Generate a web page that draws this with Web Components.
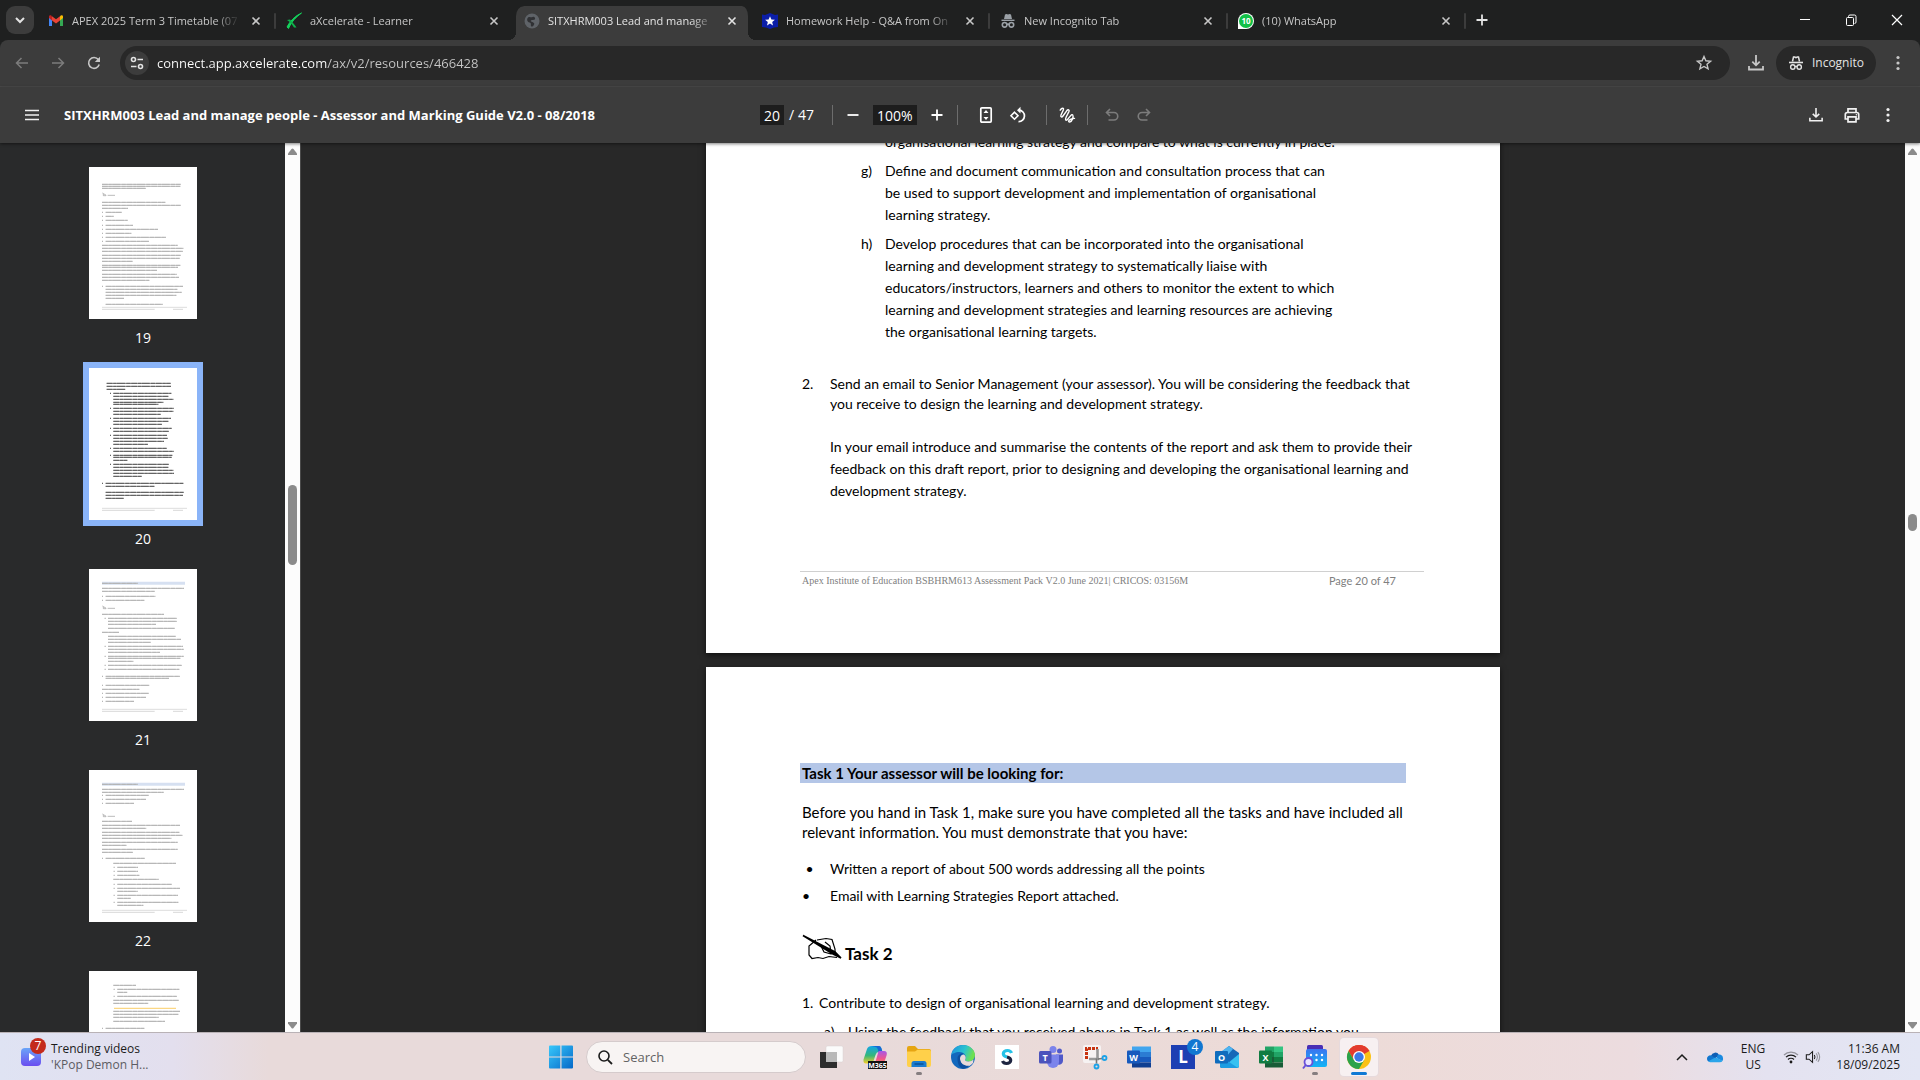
<!DOCTYPE html>
<html lang="en">
<head>
<meta charset="utf-8">
<title>SITXHRM003 Lead and manage people</title>
<style>
  html, body {
    height: 100%;
    margin: 0;
  }
  body {
    font: 12px/16px "Open Sans", "Noto Sans", sans-serif;
    overflow: hidden;
    background: #282828;
  }
</style>
</head>
<body>
<desktop-screen></desktop-screen>

<script>
const icons = {
  chevron: ['0 0 16 16', '<path d="M4 6l4 4 4-4" fill="none" stroke="currentColor" stroke-width="2"/>'],
  up: ['0 0 16 16', '<path d="M3 11l5-5 5 5" fill="none" stroke="currentColor" stroke-width="1.5"/>'],
  close: ['0 0 16 16', '<path d="M4.500 4.500l7 7m0-7l-7 7" fill="none" stroke="currentColor" stroke-width="1.600"/>'],
  plus: ['0 0 16 16', '<path d="M8 2.500v11M2.500 8h11" fill="none" stroke="currentColor" stroke-width="1.800"/>'],
  minus: ['0 0 16 16', '<path d="M2.500 8h11" fill="none" stroke="currentColor" stroke-width="1.800"/>'],
  winMin: ['0 0 12 12', '<path d="M1 5.500h10" stroke="currentColor"/>'],
  winMax: ['0 0 12 12', '<path d="M3.500 3V2.500a1.500 1.500 0 0 1 1.500-1.500h4.500A1.500 1.500 0 0 1 11 2.500V8a1.500 1.500 0 0 1-1.500 1.500" fill="none" stroke="currentColor"/><rect x="1.500" y="3.500" width="7" height="8" rx="1" fill="none" stroke="currentColor"/>'],
  winClose: ['0 0 12 12', '<path d="M1 1l10 10M11 1L1 11" stroke="currentColor" stroke-width="1.200"/>'],
  back: ['0 0 16 16', '<path d="M7.500 3L2.500 8l5 5M2.500 8H14" fill="none" stroke="currentColor" stroke-width="1.500"/>'],
  forward: ['0 0 16 16', '<path d="M8.500 3l5 5-5 5M13.500 8H2" fill="none" stroke="currentColor" stroke-width="1.500"/>'],
  reload: ['0 0 16 16', '<path d="M13.200 9.500A5.400 5.400 0 1 1 12.300 4.600L13.500 6" fill="none" stroke="currentColor" stroke-width="1.600"/><path d="M14 1.800V7H8.800z" fill="currentColor"/>'],
  tune: ['0 0 16 16', '<g fill="none" stroke="currentColor" stroke-width="1.600"><circle cx="4.500" cy="4.500" r="2"/><path d="M8.500 4.500H14M2 11.500h5.500"/><circle cx="11.500" cy="11.500" r="2"/></g>'],
  star: ['0 0 16 16', '<path d="M8 1.500l1.900 4.300 4.700.4-3.600 3.100 1.100 4.600L8 11.500l-4.100 2.400L5 9.300 1.400 6.200l4.700-.4z" fill="none" stroke="currentColor" stroke-width="1.400"/>'],
  download: ['0 0 16 16', '<path d="M8 0v10M4.300 6.700L8 10.300l3.700-3.600M1 11v3.500h14V11" fill="none" stroke="currentColor" stroke-width="1.800"/>'],
  incognito: ['0 0 16 16', '<path d="M4.500 6.500L5.500 2h1.200L8 2.700 9.300 2h1.200l1 4.500" fill="none" stroke="currentColor" stroke-width="1.500"/><path d="M1 7.500h14" stroke="currentColor" stroke-width="1.600"/><g fill="none" stroke="currentColor" stroke-width="1.400"><circle cx="4.800" cy="12" r="2.200"/><circle cx="11.200" cy="12" r="2.200"/><path d="M7 11.700q1-.6 2 0"/></g>'],
  incognitoSolid: ['0 0 16 16', '<path d="M5 1.500l1.500-.5L8 1.500 9.500 1l1.500.5L12 6H4z" fill="#9aa0a6"/><path d="M1.500 7.300h13" stroke="#9aa0a6" stroke-width="1.400"/><g fill="none" stroke="#9aa0a6" stroke-width="1.600"><circle cx="4.600" cy="11.800" r="2.300"/><circle cx="11.400" cy="11.800" r="2.300"/><path d="M6.800 11.500q1.200-.8 2.400 0"/></g>'],
  dots: ['0 0 16 16', '<g fill="currentColor"><circle cx="8" cy="2.500" r="1.600"/><circle cx="8" cy="8" r="1.600"/><circle cx="8" cy="13.500" r="1.600"/></g>'],
  menu: ['0 0 16 16', '<path d="M1 3.500h14M1 8h14M1 12.500h14" stroke="currentColor" stroke-width="1.700"/>'],
  fit: ['0 0 16 16', '<rect x="2.800" y=".9" width="10.400" height="14.200" rx="1" fill="none" stroke="currentColor" stroke-width="1.700"/><path d="M8 3l2.500 3h-5zM8 13l2.500-3h-5z" fill="currentColor"/>'],
  rotate: ['0 0 16 16', '<path d="M4.500 5.200L8 8.700l-3.500 3.500L1 8.700z" fill="none" stroke="currentColor" stroke-width="1.600"/><path d="M9 3.200a5.700 5.700 0 1 1-.5 11.400" fill="none" stroke="currentColor" stroke-width="1.700"/><path d="M10.500-.2L7 3.200l3.500 3.400z" fill="currentColor"/>'],
  draw: ['0 0 16 16', '<path d="M1.200 3.200C2.700.6 5.200.6 4.300 3L2 8c-.8 2.200.8 2.700 2 1l3.700-5.200c1.400-1.800 3-1 2.200.8L7.200 10c-1.500 3.500.3 4.300 2 1.700 1.700-2.500 3.800-5 4.600-3.700 1 1.700-1 7-3 7-2.500 0-.8-3.600 4.700-3.600" fill="none" stroke="currentColor" stroke-width="1.400" stroke-linecap="round"/>'],
  undo: ['0 0 16 16', '<path d="M6 2L2.500 5.500 6 9M3 5.500h7a3.700 3.700 0 0 1 0 7.500H4.500" fill="none" stroke="currentColor" stroke-width="1.600"/>'],
  redo: ['0 0 16 16', '<path d="M10 2l3.500 3.500L10 9M13 5.500H6A3.700 3.700 0 0 0 6 13h5.500" fill="none" stroke="currentColor" stroke-width="1.600"/>'],
  print: ['0 0 16 16', '<g fill="none" stroke="currentColor" stroke-width="1.700"><path d="M4 5V1.800h8V5"/><path d="M4 12H1.300V7.500A2 2 0 0 1 3.300 5.500h9.400a2 2 0 0 1 2 2V12H12"/><path d="M4 9.800h8v5H4z"/></g><circle cx="12.400" cy="7.800" r=".8" fill="currentColor"/>'],
  gmail: ['0 0 16 16', '<path d="M1 3.500V13h3V6.500z" fill="#4285f4"/><path d="M12 6.500V13h3V3.500z" fill="#34a853"/><path d="M12 3.500v4L15 5V3.500a1.400 1.400 0 0 0-2.300-1z" fill="#fbbc04"/><path d="M4 3.500v4L1 5V3.500a1.400 1.400 0 0 1 2.300-1z" fill="#c5221f"/><path d="M4 3.300l4 3 4-3v4.200l-4 3-4-3z" fill="#ea4335"/>'],
  axcel: ['0 0 16 16', '<path d="M15.500 0C10 4 5 9 2.500 15.500L1 14C4 8 9 3 15.500 0z" fill="#14d25c" stroke="#14d25c"/><path d="M1 7l3-.6c2 2 4.500 5 6.500 8.100H8C6 11.500 4 9 1 7z" fill="#0fb14b"/>'],
  globe: ['0 0 16 16', '<circle cx="8" cy="8" r="7.500" fill="#5f6368"/><path d="M4 4.500C6 3 7 5 8.500 4s3 .5 2.500 2-3 .5-4 1.500 2 1.500 3 2.500-1 4-2.500 3.500S8 10 5.500 9.500 2.500 6 4 4.500z" fill="#303134"/>'],
  starBadge: ['0 0 16 16', '<path d="M0 1.500L3 2l5-2 5 2 3-.5V14l-4 .5L8 16l-4-1.500L0 14z" fill="#0b1ea8"/><path d="M8 3.200l1.400 3.200 3.500.3-2.700 2.300.8 3.400L8 10.600l-3 1.800.8-3.400-2.700-2.300 3.500-.3z" fill="#fff"/>'],
  whatsapp: ['0 0 16 16', '<path d="M0 16V8a8 8 0 1 1 8 8z" fill="#fff"/><circle cx="8" cy="8" r="7" fill="#12c047"/><text x="8" y="11" font-size="8" font-weight="700" text-anchor="middle" fill="#fff">10</text>'],
  pen: ['0 0 40 26', '<path d="M1 1.500L33 18l6 6-8-4z" fill="#000" stroke="#000" stroke-width="1.600"/><path d="M15 6l9-1.500 6 1L33 15v4M14 6L7 12v9l3 3.500 6-1 5 1 6-2 8 1" fill="none" stroke="#000" stroke-width="1.200"/><path d="M19 12l3 6 7 2-1-8-5-4M23 13l4 5" fill="none" stroke="#000" stroke-width="1.200"/>'],
  widgets: ['0 0 24 24', '<defs><linearGradient id="g" x2="0" y2="1"><stop stop-color="#6aa5f8"/><stop offset="1" stop-color="#6a4df0"/></linearGradient></defs><rect x="2" y="3" width="20" height="18" rx="4" fill="url(#g)"/><path d="M10 8l6 4-6 4z" fill="#fff"/>'],
  windows: ['0 0 24 24', '<defs><linearGradient id="g" x2="1" y2="1"><stop stop-color="#38c8fb"/><stop offset="1" stop-color="#0468c8"/></linearGradient></defs><path d="M0 1.500Q0 .5 1 .5h10.300v11H0zM12.500.5H23q1 0 1 1v10H12.500zM0 12.500h11.300v11H1q-1 0-1-1zM12.500 12.500H24v10q0 1-1 1H12.500z" fill="url(#g)"/>'],
  search: ['0 0 16 16', '<circle cx="7" cy="7" r="5" fill="none" stroke="currentColor" stroke-width="1.600"/><path d="M10.800 10.800L15 15" stroke="currentColor" stroke-width="1.800"/>'],
  taskView: ['0 0 24 24', '<rect x="7" y="1" width="17" height="16" rx="1.500" fill="#fbfbfb" stroke="#d8d2d2" stroke-width=".5"/><path d="M1 7h17v16H2q-1 0-1-1z" fill="#2d2d2d"/><path d="M7 7h11v10H7z" fill="#b9b9b9"/>'],
  copilot: ['0 0 24 24', '<defs><linearGradient id="g" x2="0" y2="1"><stop stop-color="#12a5e8"/><stop offset=".55" stop-color="#35b779"/><stop offset="1" stop-color="#f6cf28"/></linearGradient><linearGradient id="h" x2="0" y2="1"><stop stop-color="#a657e8"/><stop offset=".6" stop-color="#f0568c"/><stop offset="1" stop-color="#f79552"/></linearGradient></defs><path d="M9 1h7q1.500 0 2.300 2l1.200 4h-4q-2 0-3 3l-2 6q-1 2.500-3 2.500H3q-3 0-2.500-4L4 4q1-3 5-3z" fill="url(#g)"/><path d="M9 1h7q1.500 0 2.300 2l1.200 4h-4q-1-5-3-5z" fill="#1769d4"/><path d="M16 6h5q3.500 0 2.700 4l-2 6q-1 3-4 3h-8q2 0 3-3l2-7q.5-3 1.300-3z" fill="url(#h)"/><rect x="5" y="16" width="19" height="8" fill="#111"/><text x="14.500" y="22.500" font-size="7" font-weight="700" text-anchor="middle" fill="#fff">M365</text>'],
  folder: ['0 0 24 24', '<path d="M0 3q0-2 2-2h6l3 3h11q2 0 2 2v14H0z" fill="#e6a512"/><path d="M0 6.500h8l2.500-1.700H22q2 0 2 1.700V20q0 2-2 2H2q-2 0-2-2z" fill="#ffd04a"/><path d="M4.500 22v-3.500q0-2.500 2.500-2.500h10q2.500 0 2.500 2.500V22z" fill="#1a7cd0"/><path d="M7.500 19h9" stroke="#0b4f91" stroke-width="1.400"/>'],
  edge: ['0 0 24 24', '<defs><linearGradient id="g" x2="1" y2=".3"><stop stop-color="#1b8fe0"/><stop offset=".6" stop-color="#2bc3cf"/><stop offset="1" stop-color="#6fe04f"/></linearGradient></defs><circle cx="12" cy="12" r="12" fill="#1268bd"/><path d="M.3 10C1 4 6 0 12 0c7 0 12 5 12 10 0 4-3 6.500-6.500 6.500-3 0-4-1.200-3.200-2.300C16 11.500 13.500 7 8.500 7 4 7 1 9 .3 10z" fill="url(#g)"/><path d="M9 13.500c0-2.500 2-4 4-4 2 1.500 2 3.500 1.300 4.700-.8 1.100.2 2.300 3.200 2.300 2 0 3.800-.7 5-2l-.5 3.500q-3 3.500-7 3.500C11 21.500 9 17 9 13.500z" fill="#e7dada"/><path d="M6.500 13.500c0-3 2.500-5.500 6-5-3 1-4 3-3.500 6 .7 4.500 5 6.700 9 6.200-2 2-4 3-6 3-3.500-1-5.500-5-5.500-10.200z" fill="#0c4f9f"/>'],
  solver: ['0 0 24 24', '<path d="M0 0h24v24H0z" fill="#fff"/><path d="M16.500 8Q15.500 5.500 12.500 5.500C10 5.500 8.300 7 8.300 8.800c0 2 1.700 2.700 3.700 3.200" fill="none" stroke="#25c2e8" stroke-width="3.200"/><path d="M7.500 16q1 2.500 4 2.500c2.500 0 4.200-1.500 4.200-3.300 0-2-1.700-2.700-3.700-3.200" fill="none" stroke="#1d2440" stroke-width="3.200"/>'],
  teams: ['0 0 24 24', '<circle cx="20.500" cy="6" r="2.500" fill="#5059c9"/><circle cx="14" cy="4.500" r="3.500" fill="#7b83eb"/><path d="M17 9.500h7v6.500a4 4 0 0 1-5 3.500z" fill="#5059c9"/><path d="M8 9.500h12v7.500a6 6 0 0 1-12 0z" fill="#7b83eb"/><rect y="6" width="12.500" height="12.500" rx="1.500" fill="#4b53bc"/><text x="6.200" y="15.500" font-size="9" font-weight="700" text-anchor="middle" fill="#fff">T</text>'],
  snip: ['0 0 24 24', '<rect width="18" height="18" rx="2" fill="#f6f2f2"/><path d="M3.500 14V3.500H15" fill="none" stroke="#c8320f" stroke-width="3" stroke-dasharray="3 1"/><path d="M14.500 4v9.500M6 14h10" stroke="#999" stroke-width="2.600"/><path d="M15 14l4-.5M13.500 13.500v5" stroke="#777" stroke-width="1.600"/><g fill="none" stroke="#1ba2e8" stroke-width="1.800"><circle cx="21.500" cy="13" r="2"/><circle cx="13.500" cy="21.500" r="2"/></g>'],
  word: ['0 0 24 24', '<path d="M5 1.500h19V7H5z" fill="#41a5ee"/><path d="M5 7h19v5H5z" fill="#2b7cd3"/><path d="M5 12h19v5.500H5z" fill="#185abd"/><path d="M5 17.500h19v5H5z" fill="#103f91"/><rect y="5.500" width="13" height="13" rx="1" fill="#185abd"/><text x="6.500" y="15.500" font-size="9" font-weight="700" text-anchor="middle" fill="#fff">W</text>'],
  ell: ['0 0 24 24', '<path d="M0 0h24v24H0z" fill="#1d3fb3"/><text x="12" y="18" font-size="17" font-weight="700" text-anchor="middle" fill="#fff">L</text>'],
  outlook: ['0 0 24 24', '<path d="M5 8l9-7 10 7v13q0 2-2 2H7q-2 0-2-2z" fill="#1668b8"/><path d="M7 6l7-5 4 3-8 9z" fill="#4fb4f0"/><path d="M24 9v12q0 2-2 2H7z" fill="#35c1f1"/><path d="M5 11l18 12H7q-2 0-2-2z" fill="#1b9de2"/><rect y="6" width="13" height="12.500" rx="1" fill="#0f6cbd"/><text x="6.500" y="15.500" font-size="9" font-weight="700" text-anchor="middle" fill="#fff">O</text>'],
  excel: ['0 0 24 24', '<path d="M6 1.500h9V7H6z" fill="#21a366"/><path d="M15 1.500h9V7h-9z" fill="#33c481"/><path d="M6 7h9v5H6z" fill="#107c41"/><path d="M15 7h9v5h-9z" fill="#21a366"/><path d="M6 12h18v5.500H6z" fill="#107c41"/><path d="M6 12h9v5.500H6z" fill="#185c37"/><path d="M6 17.500h18v5H6z" fill="#185c37"/><rect y="5.500" width="13" height="13" rx="1" fill="#107c41"/><text x="6.500" y="15.500" font-size="9" font-weight="700" text-anchor="middle" fill="#fff">X</text>'],
  lens: ['0 0 24 24', '<defs><linearGradient id="g" x2="0" y2="1"><stop stop-color="#3a74f0"/><stop offset="1" stop-color="#12b5f5"/></linearGradient></defs><path d="M4 5V1.500Q4 0 5.500 0h13Q20 0 20 1.500V5z" fill="#4a2fb5"/><rect x="3" y="4" width="21" height="18" rx="2" fill="url(#g)"/><g fill="#fff"><circle cx="8" cy="10" r="1.200"/><circle cx="13.500" cy="10" r="1.200"/><circle cx="19" cy="10" r="1.200"/><circle cx="13.500" cy="15" r="1.200"/><circle cx="19" cy="15" r="1.200"/></g><circle cx="5.500" cy="17" r="4" fill="#e8e4ff" stroke="#6a50d8" stroke-width="1.800"/><path d="M2.800 20L0 23.500" stroke="#6a50d8" stroke-width="2"/>'],
  chrome: ['0 0 24 24', '<circle cx="12" cy="12" r="12" fill="#fbc116"/><path d="M12 12L1.600 6A12 12 0 0 1 22.400 6z" fill="#e33b2e"/><path d="M12 6h10.400A12 12 0 0 0 1.600 6l5.200 9z" fill="#e33b2e"/><path d="M1.600 6A12 12 0 0 0 12 24l5.200-9H6.800z" fill="#2ba24c"/><circle cx="12" cy="12" r="6" fill="#fff"/><circle cx="12" cy="12" r="4.700" fill="#3b78e7"/>'],
  cloud: ['0 0 24 16', '<path d="M6 6A6.500 6.500 0 0 1 18 5l-5 5-9 3z" fill="#0f5fb5"/><path d="M0 11a5 5 0 0 1 7-5l8 5-5 4H4.500A4.500 4.500 0 0 1 0 11z" fill="#1277cf"/><path d="M15 6.500A5 5 0 0 1 24 9.500a5 5 0 0 1-1 4.500l-8-4z" fill="#1a8ae0"/><path d="M2 14.500l9-5q2-1.200 4 0l8.500 4.200Q22 16 19 16H5q-2 0-3-1.500z" fill="#2ba5ea"/>'],
  wifi: ['0 0 16 16', '<circle cx="8" cy="13" r="1.400" fill="currentColor"/><g fill="none" stroke="currentColor" stroke-width="1.200"><path d="M5 10.500a4.200 4.200 0 0 1 6 0M3 8.200a7 7 0 0 1 10 0"/><path d="M1 6a10 10 0 0 1 14 0" opacity=".4"/></g>'],
  volume: ['0 0 18 16', '<g fill="none" stroke="currentColor" stroke-width="1.200"><path d="M1.500 5.500h3L8.500 2v12l-4-3.500h-3z"/><path d="M10.500 5.700q1.500 2.300 0 4.600"/><path d="M12.500 4q3 4 0 8M14.500 2.500q4 5.500 0 11" opacity=".4"/></g>'],
}

class BaseElement extends HTMLElement {
  connectedCallback() {
    if (this.shadowRoot) return
    this.attachShadow({ mode: 'open' })
    const template = document.createElement('template')
    template.innerHTML = this.render()
    this.shadowRoot.appendChild(template.content.cloneNode(true))
  }
}

class UiIcon extends BaseElement {
  render() {
    const [viewBox, body] = icons[this.getAttribute('name')]
    return /* html */ `
<style>
  :host {
    display: inline-flex;
    flex: none;
    width: var(--size, 16px);
    height: var(--size, 16px);
  }
  svg {
    width: 100%;
    height: 100%;
    overflow: visible;
  }
</style>
<svg viewBox="${viewBox}" aria-hidden="true">${body}</svg>
`
  }
}

// round transparent button around one icon
class IconButton extends BaseElement {
  render() {
    return /* html */ `
<style>
  :host {
    display: flex;
    flex: none;
    width: var(--box, 36px);
    height: var(--box, 36px);
  }
  button {
    display: flex;
    align-items: center;
    justify-content: center;
    width: 100%;
    height: 100%;
    padding: 0;
    border: 0;
    border-radius: 8px;
    background: none;
    color: inherit;
  }
</style>
<button aria-label="${this.getAttribute('label')}"><ui-icon name="${this.getAttribute('name')}"></ui-icon></button>
`
  }
}

class BrowserTab extends BaseElement {
  render() {
    return /* html */ `
<style>
  :host {
    position: relative;
    display: flex;
    align-items: center;
    flex: 0 1 238px;
    min-width: 0;
    height: 34px;
    box-sizing: border-box;
    padding: 0 0 4px 10px;
    font-size: 11px;
    color: #c7c7c7;
  }
  :host([active]) {
    padding-left: 8px;
    border: solid transparent;
    border-width: 0 4px 0 2px;
    background: #3c3c3c padding-box;
    border-radius: 10px 10px 0 0;
    color: #e3e3e3;
  }
  /* flared feet of the selected tab */
  :host([active])::before,
  :host([active])::after {
    content: '';
    position: absolute;
    bottom: 0;
    width: 8px;
    height: 8px;
  }
  :host([active])::before {
    left: -8px;
    background: radial-gradient(circle at 0 0, #1f2020 8px, #3c3c3c 8px);
  }
  :host([active])::after {
    right: -8px;
    background: radial-gradient(circle at 100% 0, #1f2020 8px, #3c3c3c 8px);
  }
  .select {
    display: flex;
    align-items: center;
    gap: 8px;
    flex: 1;
    min-width: 0;
    padding: 0;
    border: 0;
    background: none;
    font: inherit;
    color: inherit;
  }
  .title {
    flex: 1;
    overflow: hidden;
    text-align: left;
    white-space: nowrap;
    mask-image: linear-gradient(to right, #000 85%, transparent);
  }
  icon-button {
    --box: 16px;
    margin-left: 8px;
  }
  .rule {
    width: 2px;
    height: 16px;
    margin-left: 10px;
    border-radius: 1px;
    background: #3c3c3c;
  }
  :host([plain]) .rule {
    background: none;
  }
  :host([active]) .rule {
    width: 0;
    margin-left: 8px;
  }
</style>
<button class="select">
  <ui-icon name="${this.getAttribute('icon')}"></ui-icon>
  <span class="title"><slot></slot></span>
</button>
<icon-button name="close" label="Close tab"></icon-button>
<span class="rule"></span>
`
  }
}

class TabStrip extends BaseElement {
  render() {
    return /* html */ `
<style>
  :host {
    display: flex;
    align-items: flex-end;
    height: 40px;
    background: #1f2020;
    color: #e3e3e3;
  }
  .menu {
    --box: 28px;
    margin: 0 4px 6px 6px;
    border-radius: 9px;
    background: #3c3c3c;
  }
  .tabs {
    display: flex;
    flex: 0 1 1428px;
    min-width: 0;
  }
  .new {
    --box: 28px;
    margin: 0 0 6px 2px;
  }
  .window {
    display: flex;
    align-self: stretch;
    align-items: center;
    margin-left: auto;
    color: #fff;
  }
  .window icon-button {
    --box: 46px;
    --size: 12px;
    height: 40px;
  }
</style>
<icon-button class="menu" name="chevron" label="Search tabs"></icon-button>
<div class="tabs">
  <browser-tab icon="gmail">APEX 2025 Term 3 Timetable (07</browser-tab>
  <browser-tab icon="axcel" plain>aXcelerate - Learner</browser-tab>
  <browser-tab icon="globe" active plain>SITXHRM003 Lead and manage</browser-tab>
  <browser-tab icon="starBadge">Homework Help - Q&amp;A from On</browser-tab>
  <browser-tab icon="incognitoSolid">New Incognito Tab</browser-tab>
  <browser-tab icon="whatsapp">(10) WhatsApp</browser-tab>
</div>
<icon-button class="new" name="plus" label="New tab"></icon-button>
<div class="window">
  <icon-button name="winMin" label="Minimise"></icon-button>
  <icon-button name="winMax" label="Restore"></icon-button>
  <icon-button name="winClose" label="Close"></icon-button>
</div>
`
  }
}

class AddressBar extends BaseElement {
  render() {
    return /* html */ `
<style>
  :host {
    display: flex;
    align-items: center;
    height: 47px;
    box-sizing: border-box;
    padding: 0 4px;
    border-radius: 8px 8px 0 0;
    border-bottom: 1px solid #4a4a4a;
    background: #3c3c3c;
    color: #c7c7c7;
  }
  .off {
    color: #7c7c7c;
  }
  .url {
    display: flex;
    align-items: center;
    flex: 1;
    height: 34px;
    margin: 0 8px;
    padding: 0 8px 0 5px;
    border-radius: 17px;
    background: #282828;
  }
  .site {
    --box: 24px;
    border-radius: 50%;
    background: #3c3c3c;
    color: #e3e3e3;
  }
  input {
    flex: 1;
    padding: 0 8px;
    border: 0;
    outline: 0;
    font: 13px/20px "Open Sans", sans-serif;
    color: #e3e3e3;
    /* host part brighter than the path */
    background: linear-gradient(to right, #fff 178px, #c7c7c7 178px) text;
    -webkit-text-fill-color: transparent;
  }
  .incognito {
    display: flex;
    align-items: center;
    gap: 8px;
    height: 34px;
    margin: 0 4px 0 2px;
    padding: 0 12px;
    border: 0;
    border-radius: 17px;
    background: #282828;
    font: inherit;
    color: #e3e3e3;
  }
</style>
<icon-button class="off" name="back" label="Back"></icon-button>
<icon-button class="off" name="forward" label="Forward"></icon-button>
<icon-button name="reload" label="Reload"></icon-button>
<div class="url">
  <icon-button class="site" name="tune" label="Site information"></icon-button>
  <input aria-label="Address" value="connect.app.axcelerate.com/ax/v2/resources/466428">
  <icon-button name="star" label="Bookmark this page"></icon-button>
</div>
<icon-button name="download" label="Downloads"></icon-button>
<button class="incognito"><ui-icon name="incognito"></ui-icon>Incognito</button>
<icon-button name="dots" label="Menu"></icon-button>
`
  }
}

class PdfToolbar extends BaseElement {
  render() {
    return /* html */ `
<style>
  :host {
    display: grid;
    grid-template-columns: 1fr auto 1fr;
    align-items: center;
    height: 56px;
    padding: 0 14px;
    background: #3c3c3c;
    color: #f1f1f1;
    box-shadow: 0 1px 3px rgba(0, 0, 0, .5);
    z-index: 1;
  }
  .side, .tools {
    display: flex;
    align-items: center;
  }
  h1 {
    margin: 0 0 0 14px;
    font-size: 13px;
    line-height: 20px;
    font-weight: 700;
    white-space: nowrap;
    color: #fff;
  }
  .tools {
    font-size: 14px;
    color: #fff;
  }
  .tools icon-button {
    --box: 32px;
  }
  input {
    height: 20px;
    box-sizing: border-box;
    padding: 0;
    border: 0;
    background: #1d1d1d;
    font: inherit;
    text-align: center;
    color: #fff;
  }
  .page {
    width: 24px;
    margin-right: 5px;
  }
  .zoom {
    width: 44px;
    margin: 0 4px;
  }
  .rule {
    width: 1px;
    height: 20px;
    margin: 0 4px;
    background: #6d6d6d;
  }
  .count {
    margin-right: 14px;
  }
  .group {
    display: flex;
    padding: 0 8px;
  }
  .history {
    display: flex;
    padding-left: 4px;
  }
  .off {
    color: #7c7c7c;
  }
  .end {
    justify-content: flex-end;
  }
</style>
<div class="side">
  <icon-button name="menu" label="Menu"></icon-button>
  <h1>SITXHRM003 Lead and manage people - Assessor and Marking Guide V2.0 - 08/2018</h1>
</div>
<div class="tools">
  <input class="page" aria-label="Page number" value="20"><span class="count">/ 47</span>
  <span class="rule"></span>
  <icon-button name="minus" label="Zoom out"></icon-button>
  <input class="zoom" aria-label="Zoom level" value="100%">
  <icon-button name="plus" label="Zoom in"></icon-button>
  <span class="rule"></span>
  <div class="group">
    <icon-button name="fit" label="Fit to page"></icon-button>
    <icon-button name="rotate" label="Rotate"></icon-button>
  </div>
  <span class="rule"></span>
  <icon-button name="draw" label="Draw"></icon-button>
  <span class="rule"></span>
  <div class="history">
    <icon-button class="off" name="undo" label="Undo"></icon-button>
    <icon-button class="off" name="redo" label="Redo"></icon-button>
  </div>
</div>
<div class="side end">
  <icon-button name="download" label="Download" style="--size: 14px"></icon-button>
  <icon-button name="print" label="Print"></icon-button>
  <icon-button name="dots" label="More"></icon-button>
</div>
`
  }
}

class ScrollRail extends BaseElement {
  render() {
    return /* html */ `
<style>
  :host {
    display: flex;
    flex-direction: column;
    align-items: center;
    flex: none;
    width: 15px;
    box-sizing: border-box;
    padding: 5px 0 3px;
    background: #fcfcfc;
  }
  svg {
    flex: none;
    width: 9px;
    height: 8px;
    fill: #8b8b8b;
  }
  .before {
    flex: ${this.getAttribute('before')};
  }
  .after {
    flex: ${this.getAttribute('after')};
  }
  .thumb {
    flex: ${this.getAttribute('size')};
    width: 9px;
    border-radius: 5px;
    background: #8b8b8b;
  }
</style>
<svg viewBox="0 0 9 8"><path d="M3.500 1q1-1 2 0L9 5.500V7H0V5.500z"/></svg>
<span class="before"></span>
<span class="thumb"></span>
<span class="after"></span>
<svg viewBox="0 0 9 8"><path d="M3.500 7q1 1 2 0L9 2.500V1H0v1.500z"/></svg>
`
  }
}

// per sheet: "x y width" of each text line in a 324 x 456 box,
// a leading letter adds a list marker 11 (b) or 10 (l) units to the left
const sheets = {
  19: { title: 83, lines: '39 52 236,39 58 235,39 64 132,39 106 190,39 115 236,39 124 78,b50 136 48,b50 148 24,b50 160 66,b50 175 82,b50 187 157,b50 199 77,b50 211 181,b50 223 130,39 235 227,39 244 244,39 253 243,39 265 236,39 274 233,39 283 92,39 295 235,39 301 228,39 310 165,39 322 224,39 331 231,39 340 142,b50 358 232,50 367 215,50 376 228,50 385 212,50 394 55,50 412 171' },
  20: { dark: true, lines: '53 46 192,53 55 193,53 64 56,l73 76 174,73 85 165,73 94 180,73 103 150,73 109 135,l73 121 181,73 130 180,73 139 142,l73 151 173,73 160 165,73 169 146,l73 181 175,73 190 167,l73 202 161,73 211 163,73 220 152,73 229 104,l73 241 160,73 250 181,l73 262 177,73 268 175,73 277 42,l73 289 167,73 298 165,73 307 180,73 316 182,73 325 85,b50 346 233,50 355 147,50 373 234,50 382 232,50 391 54' },
  21: { title: 116, band: '#d6e0f1', lines: '39 43 107,39 58 246,39 67 158,b50 82 149,b50 94 116,39 136 186,l57 148 207,57 157 207,57 166 144,57 178 200,39 190 51,57 202 203,57 211 219,57 220 128,l57 232 225,57 241 227,57 250 156,l57 262 227,57 268 217,57 277 76,l57 289 222,l57 301 214,b50 322 223,50 328 190,b50 349 131,39 361 112,b50 373 129,b50 385 121,b50 397 85' },
  22: { title: 137, band: '#d6e0f1', lines: '39 43 107,39 58 246,39 67 185,b50 76 129,b50 88 121,b50 100 85,39 154 90,39 166 234,39 175 133,39 187 232,39 196 242,39 205 208,39 217 227,39 226 74,39 238 227,39 247 93,b50 265 117,73 280 188,b85 292 62,b85 304 62,b85 316 66,73 328 136,b85 343 163,b85 355 188,85 364 61,b85 376 182,85 385 40,b85 397 183,85 406 78' },
  23: { mark: 112, lines: '73 43 68,b85 55 186,85 64 30,b85 76 179,73 88 196,73 97 105,73 121 200,73 130 195,73 139 136,73 151 155,b50 172 116' },
}

class PageThumb extends BaseElement {
  render() {
    const number = this.getAttribute('number')
    const sheet = sheets[number]
    let path = ''
    sheet.lines.split(',').forEach((line) => {
      const marker = line.match(/^[bl]/)
      const [x, y, w] = line.replace(/^[bl]/, '').split(' ').map(Number)
      if (marker) path += `M${x - (marker[0] === 'b' ? 11 : 10)} ${y}h3`
      path += `M${x} ${y}h${w}`
    })
    return /* html */ `
<style>
  :host {
    display: flex;
    flex-direction: column;
    align-items: center;
    flex: none;
  }
  button {
    display: block;
    padding: 0;
    border: 6px solid transparent;
    background: none;
  }
  :host([current]) button {
    border-color: #8ab4f8;
  }
  svg {
    display: block;
    width: 108px;
    height: 152px;
    background: #fff;
  }
  span {
    padding: 3px 0 14px;
    font-size: 14px;
    line-height: 20px;
    color: #fff;
  }
</style>
<button aria-label="Go to page ${number}">
  <svg viewBox="0 0 324 456" fill="none">
    ${sheet.band ? `<path d="M39 43h249" stroke="${sheet.band}" stroke-width="9"/>` : ''}
    ${sheet.mark ? `<path d="M75 ${sheet.mark}h186" stroke="#fbd784" stroke-width="4"/>` : ''}
    ${sheet.title ? `<path d="M40 ${sheet.title - 5}l12 7M43 ${sheet.title - 2}v5h8M56 ${sheet.title + 2}h22" stroke="#999" stroke-width="2"/>` : ''}
    <path d="${path}" stroke="${sheet.dark ? '#777' : '#bbb'}" stroke-width="3"/>
    <path d="${path}" stroke="${sheet.dark ? '#444' : '#aaa'}" stroke-width="2" stroke-dasharray="17 3 9 2 24 4 12 3"/>
    <path d="M39 421h255" stroke="#ccc" stroke-width="2"/>
    <path d="M39 427h158M252 427h30" stroke="#c4c4c4" stroke-width="2"/>
  </svg>
</button>
${this.hasAttribute('unlabelled') ? '' : `<span>${number}</span>`}
`
  }
}

class ThumbPane extends BaseElement {
  render() {
    return /* html */ `
<style>
  :host {
    display: flex;
    flex: none;
    width: 300px;
    border-right: 1px solid #4a4a4a;
    background: #292a2b;
  }
  nav {
    display: flex;
    flex-direction: column;
    flex: 1;
    overflow: hidden;
    padding-top: 18px;
  }
  page-thumb {
    padding-left: 1px;
  }
</style>
<nav aria-label="Pages">
  <page-thumb number="19"></page-thumb>
  <page-thumb number="20" current></page-thumb>
  <page-thumb number="21"></page-thumb>
  <page-thumb number="22"></page-thumb>
  <page-thumb number="23" unlabelled></page-thumb>
</nav>
<scroll-rail before="327" size="80" after="453"></scroll-rail>
`
  }
}

class PdfPage extends BaseElement {
  render() {
    return /* html */ `
<style>
  :host {
    display: block;
    flex: none;
    width: 794px;
    box-sizing: border-box;
    padding: 0 76px 0 94px;
    background: #fff;
    box-shadow: 0 2px 6px rgba(0, 0, 0, .6);
    color: #000;
    font: 14px/22px Lato, sans-serif;
  }
</style>
<slot></slot>
`
  }
}

// marker and text of one list entry
class ListEntry extends BaseElement {
  render() {
    return /* html */ `
<style>
  :host {
    display: flex;
    white-space: nowrap;
  }
  .marker {
    flex: none;
    width: var(--marker, 24px);
  }
</style>
<span class="marker">${this.getAttribute('marker')}</span>
<div><slot></slot></div>
`
  }
}

class PdfViewer extends BaseElement {
  render() {
    return /* html */ `
<style>
  :host {
    display: flex;
    flex: 1;
    min-width: 0;
    background: #282828;
  }
  .pages {
    display: flex;
    flex-direction: column;
    align-items: center;
    gap: 14px;
    flex: 1;
    overflow: hidden;
  }
  /* scrolled so that its first visible line is cut */
  .twenty {
    margin-top: -12px;
  }
  .letters {
    display: grid;
    gap: 7px;
    padding-left: 61px;
  }
  .numbers {
    --marker: 28px;
    padding: 31px 0 0 2px;
    line-height: 20px;
  }
  p {
    margin: 0;
    white-space: nowrap;
  }
  .follow {
    padding: 22px 0 0 30px;
  }
  footer {
    display: flex;
    justify-content: space-between;
    align-items: center;
    margin-top: 69px;
    padding: 0 28px 63px 2px;
    border-top: 1px solid #d0d0d0;
    color: #808080;
    font-size: 11px;
    line-height: 18px;
  }
  .serif {
    font-family: "Liberation Serif", serif;
    font-size: 10px;
  }
  h2 {
    margin: 96px 18px 0 0;
    padding-left: 2px;
    background: #b4c6e7;
    font-size: 15px;
    line-height: 20px;
  }
  .intro {
    padding: 19px 0 16px 2px;
    font-size: 15px;
    line-height: 20px;
  }
  .bullets {
    display: grid;
    gap: 5px;
    padding-left: 2px;
    --marker: 28px;
  }
  h3 {
    display: flex;
    align-items: flex-end;
    gap: 3px;
    margin: 27px 0 0 2px;
    font-size: 17px;
    line-height: 20px;
  }
  h3 ui-icon {
    width: 40px;
    height: 26px;
    margin-bottom: 4px;
  }
  .contribute {
    --marker: 17px;
    padding: 28px 0 7px 2px;
  }
  .using {
    padding-left: 24px;
  }
</style>
<div class="pages">
  <pdf-page class="twenty">
    <div class="letters">
      <list-entry marker="">organisational learning strategy and compare to what is currently in place.</list-entry>
      <list-entry marker="g)">Define and document communication and consultation process that can<br>be used to support development and implementation of organisational<br>learning strategy.</list-entry>
      <list-entry marker="h)">Develop procedures that can be incorporated into the organisational<br>learning and development strategy to systematically liaise with<br>educators/instructors, learners and others to monitor the extent to which<br>learning and development strategies and learning resources are achieving<br>the organisational learning targets.</list-entry>
    </div>
    <list-entry class="numbers" marker="2.">Send an email to Senior Management (your assessor). You will be considering the feedback that<br>you receive to design the learning and development strategy.</list-entry>
    <p class="follow">In your email introduce and summarise the contents of the report and ask them to provide their<br>feedback on this draft report, prior to designing and developing the organisational learning and<br>development strategy.</p>
    <footer><span class="serif">Apex Institute of Education BSBHRM613 Assessment Pack V2.0 June 2021| CRICOS: 03156M</span><span>Page 20 of 47</span></footer>
  </pdf-page>
  <pdf-page>
    <h2>Task 1 Your assessor will be looking for:</h2>
    <p class="intro">Before you hand in Task 1, make sure you have completed all the tasks and have included all<br>relevant information. You must demonstrate that you have:</p>
    <div class="bullets">
      <list-entry marker="&nbsp;•">Written a report of about 500 words addressing all the points</list-entry>
      <list-entry marker="•">Email with Learning Strategies Report attached.</list-entry>
    </div>
    <h3><ui-icon name="pen"></ui-icon>Task 2</h3>
    <list-entry class="contribute" marker="1.">Contribute to design of organisational learning and development strategy.</list-entry>
    <list-entry class="using" marker="a)">Using the feedback that you received above in Task 1 as well as the information you</list-entry>
  </pdf-page>
</div>
<scroll-rail before="357" size="17" after="489"></scroll-rail>
`
  }
}

class TaskApp extends BaseElement {
  render() {
    const badge = this.getAttribute('badge')
    return /* html */ `
<style>
  :host {
    position: relative;
    display: flex;
    flex: none;
    width: 38px;
    height: 38px;
    --size: 24px;
  }
  button {
    display: flex;
    align-items: center;
    justify-content: center;
    width: 100%;
    padding: 0;
    border: 0;
    border-radius: 4px;
    background: none;
    font: inherit;
  }
  :host([active]) button {
    background: #f7f0f1;
    box-shadow: 0 0 0 1px #e6dadd;
  }
  :host([running])::after {
    content: '';
    position: absolute;
    left: 16px;
    bottom: 1px;
    width: 6px;
    height: 3px;
    border-radius: 2px;
    background: #857e80;
  }
  :host([active])::after {
    left: 11px;
    width: 16px;
    background: #0f78d4;
  }
  .badge {
    position: absolute;
    top: 1px;
    right: -1px;
    width: 16px;
    height: 16px;
    border-radius: 50%;
    background: #1177d1;
    text-align: center;
    color: #fff;
  }
</style>
<button aria-label="${this.getAttribute('label')}"><ui-icon name="${this.getAttribute('icon')}"></ui-icon></button>
${badge ? `<span class="badge">${badge}</span>` : ''}
`
  }
}

class TaskBar extends BaseElement {
  render() {
    return /* html */ `
<style>
  :host {
    display: grid;
    grid-template-columns: 1fr auto 1fr;
    align-items: center;
    height: 48px;
    box-sizing: border-box;
    border-top: 1px solid #b9b2b6;
    background: linear-gradient(to right, #dfe3f3, #e3dfee 9%, #e8dada 14%, #e8dada 45%, #eddbd7 70%, #ecdcdf 85%, #e4e2f0 92%, #e3e6f4);
    color: #1b1b1b;
  }
  button {
    display: flex;
    align-items: center;
    padding: 0;
    border: 0;
    background: none;
    font: inherit;
    color: inherit;
  }
  .news {
    position: relative;
    justify-self: start;
    gap: 8px;
    padding-left: 19px;
    text-align: left;
  }
  .news ui-icon {
    --size: 24px;
  }
  .news small {
    display: block;
    font-size: 12px;
    color: #5c5c62;
  }
  .badge {
    position: absolute;
    top: -3px;
    left: 30px;
    width: 16px;
    height: 16px;
    border-radius: 50%;
    background: #c42b1c;
    text-align: center;
    color: #fff;
  }
  .apps {
    display: flex;
    align-items: center;
    gap: 6px;
  }
  .search {
    display: flex;
    align-items: center;
    gap: 10px;
    width: 220px;
    height: 32px;
    box-sizing: border-box;
    padding: 0 10px;
    border: 1px solid #d5cbcc;
    border-radius: 16px;
    background: #f8f4f3;
  }
  .search input {
    min-width: 0;
    padding: 0;
    border: 0;
    outline: 0;
    background: none;
    font: 13px/20px "Open Sans", sans-serif;
  }
  .search input::placeholder {
    color: #636363;
  }
  .tray {
    display: flex;
    align-items: center;
    justify-self: end;
    padding-right: 20px;
  }
  .cloud {
    margin-left: 17px;
  }
  .lang {
    display: block;
    margin: 0 18px;
    text-align: center;
  }
  .net {
    gap: 6px;
  }
  .clock {
    display: block;
    margin-left: 15px;
    text-align: right;
  }
</style>
<button class="news">
  <ui-icon name="widgets"></ui-icon><span class="badge">7</span>
  <span>Trending videos<small>'KPop Demon H...</small></span>
</button>
<div class="apps">
  <task-app icon="windows" label="Start"></task-app>
  <label class="search"><ui-icon name="search"></ui-icon><input placeholder="Search" aria-label="Search"></label>
  <task-app icon="taskView" label="Task view"></task-app>
  <task-app icon="copilot" label="Copilot"></task-app>
  <task-app icon="folder" label="File Explorer" running></task-app>
  <task-app icon="edge" label="Edge"></task-app>
  <task-app icon="solver" label="Solver"></task-app>
  <task-app icon="teams" label="Teams"></task-app>
  <task-app icon="snip" label="Snipping Tool"></task-app>
  <task-app icon="word" label="Word"></task-app>
  <task-app icon="ell" label="L" badge="4"></task-app>
  <task-app icon="outlook" label="Outlook"></task-app>
  <task-app icon="excel" label="Excel"></task-app>
  <task-app icon="lens" label="Lens" running></task-app>
  <task-app icon="chrome" label="Chrome" running active></task-app>
</div>
<div class="tray">
  <button aria-label="Show hidden icons"><ui-icon name="up"></ui-icon></button>
  <button class="cloud" aria-label="OneDrive"><ui-icon name="cloud"></ui-icon></button>
  <button class="lang">ENG<br>US</button>
  <button class="net" aria-label="Network and sound"><ui-icon name="wifi"></ui-icon><ui-icon name="volume"></ui-icon></button>
  <button class="clock">11:36 AM<br>18/09/2025</button>
</div>
`
  }
}

class DesktopScreen extends BaseElement {
  render() {
    return /* html */ `
<style>
  :host {
    display: flex;
    flex-direction: column;
    height: 100vh;
    background: #1f2020;
  }
  main {
    display: flex;
    flex: 1;
    min-height: 0;
  }
</style>
<tab-strip></tab-strip>
<address-bar></address-bar>
<pdf-toolbar></pdf-toolbar>
<main>
  <thumb-pane></thumb-pane>
  <pdf-viewer></pdf-viewer>
</main>
<task-bar></task-bar>
`
  }
}

customElements.define('ui-icon', UiIcon)
customElements.define('icon-button', IconButton)
customElements.define('browser-tab', BrowserTab)
customElements.define('tab-strip', TabStrip)
customElements.define('address-bar', AddressBar)
customElements.define('pdf-toolbar', PdfToolbar)
customElements.define('scroll-rail', ScrollRail)
customElements.define('page-thumb', PageThumb)
customElements.define('thumb-pane', ThumbPane)
customElements.define('pdf-page', PdfPage)
customElements.define('list-entry', ListEntry)
customElements.define('pdf-viewer', PdfViewer)
customElements.define('task-app', TaskApp)
customElements.define('task-bar', TaskBar)
customElements.define('desktop-screen', DesktopScreen)
</script>
</body>
</html>
